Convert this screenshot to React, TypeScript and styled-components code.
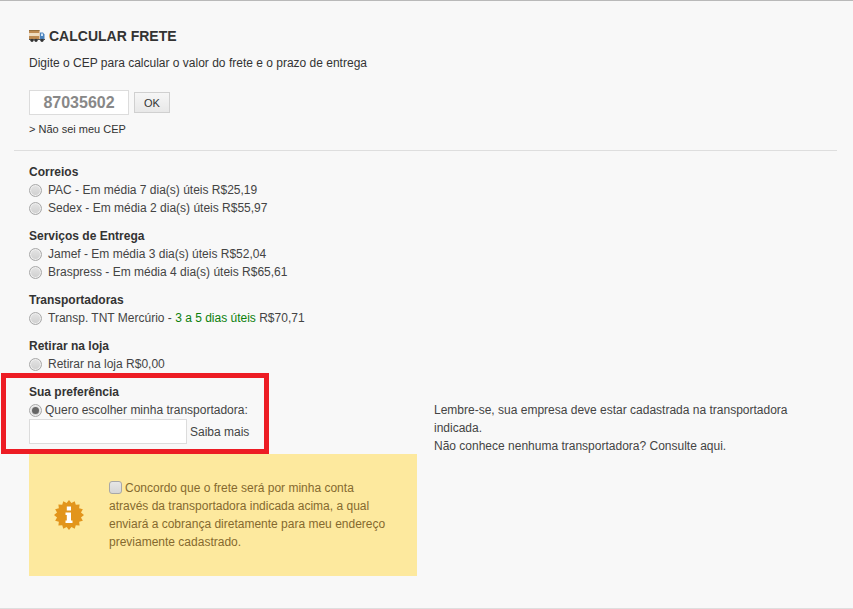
import styled, { createGlobalStyle } from 'styled-components'

const GlobalStyle = createGlobalStyle`
  html, body {
    margin: 0;
    padding: 0;
    background: #f8f8f8;
  }
  body {
    font-family: "Liberation Sans", Arial, sans-serif;
    font-size: 12px;
    color: #333;
  }
`

const Page = styled.div`
  width: 853px;
  height: 609px;
  box-sizing: border-box;
  border-top: 1px solid #b9b9b9;
  border-bottom: 1px solid #dedede;
  background: #f8f8f8;
  overflow: hidden;
`

const CepSection = styled.section`
  margin: 0 16px 0 14px;
  padding: 26px 0 13px 15px;
  border-bottom: 1px solid #dedede;
`

const Title = styled.h2`
  display: flex;
  align-items: center;
  gap: 4px;
  margin: 0;
  height: 18px;
  font-size: 14px;
  font-weight: 700;
  color: #333;
`

const Hint = styled.p`
  margin: 9px 0 0;
  line-height: 18px;
`

const CepRow = styled.div`
  display: flex;
  align-items: center;
  gap: 5px;
  margin-top: 18px;
`

const CepInput = styled.input`
  box-sizing: border-box;
  width: 100px;
  height: 25px;
  padding: 0;
  border: 1px solid #dcdcdc;
  background: #fff;
  color: #888;
  font: 700 16px "Liberation Sans", Arial, sans-serif;
  text-align: center;
`

const OkButton = styled.button`
  box-sizing: border-box;
  width: 36px;
  height: 21px;
  padding: 0;
  border: 1px solid #d0d0d0;
  background: linear-gradient(#f6f6f6, #e8e8e8);
  color: #333;
  font: 11px "Liberation Sans", Arial, sans-serif;
`

const CepLink = styled.a`
  display: block;
  margin-top: 6px;
  font-size: 11px;
  line-height: 16px;
  color: #333;
`

const Options = styled.div`
  padding: 12px 0 0 29px;
`

const Group = styled.div`
  margin-bottom: 10px;
`

const GroupName = styled.div`
  font-weight: 700;
  line-height: 18px;
`

const OptionRow = styled.label`
  display: flex;
  align-items: center;
  gap: 6px;
  height: 18px;
  color: #444;
`

const Radio = styled.span<{ $checked?: boolean }>`
  position: relative;
  flex: none;
  box-sizing: border-box;
  width: 13px;
  height: 13px;
  border: 1px solid #a8a8a8;
  border-radius: 50%;
  background: linear-gradient(#e4e4e4, #cfcfcf);
  box-shadow: inset 0 0 0 1px #efefef;

  ${props => props.$checked && `
    &::after {
      content: '';
      position: absolute;
      top: 2px;
      left: 2px;
      width: 7px;
      height: 7px;
      border-radius: 50%;
      background: #666;
    }
  `}
`

const Green = styled.span`
  color: #0b7f0b;
`

const PreferenceRow = styled.div`
  display: flex;
  align-items: flex-start;
`

const PreferenceBlock = styled.div`
  position: relative;
  flex: none;
  width: 405px;

  &::after {
    content: '';
    position: absolute;
    top: -10px;
    left: -28px;
    width: 258px;
    height: 71px;
    border: 5px solid #ed1c24;
  }
`

const ChoiceRow = styled(OptionRow)`
  gap: 3px;
`

const CarrierRow = styled.div`
  display: flex;
  align-items: center;
  gap: 3px;
  height: 25px;
  color: #444;
`

const CarrierInput = styled.input`
  box-sizing: border-box;
  width: 158px;
  height: 25px;
  padding: 0;
  border: 1px solid #dcdcdc;
  background: #fff;
`

const Notice = styled.div`
  display: flex;
  align-items: center;
  box-sizing: border-box;
  width: 388px;
  height: 122px;
  margin-top: 10px;
  padding-left: 25px;
  background: #fde99e;
  color: #85692e;
`

const NoticeText = styled.p`
  margin: 0 0 0 25px;
  width: 280px;
  line-height: 18px;
`

const Check = styled.span`
  display: inline-block;
  box-sizing: border-box;
  width: 13px;
  height: 13px;
  margin-right: 3px;
  vertical-align: -2px;
  border: 1px solid #a8a8a8;
  border-radius: 3px;
  background: linear-gradient(#e6e6e6, #d6d6d6);
`

const SideNote = styled.p`
  margin: 18px 0 0;
  width: 380px;
  line-height: 18px;
  color: #444;
`

function TruckIcon() {
  return (
    <svg width="16" height="12" viewBox="0 0 16 12" aria-hidden="true">
      <rect x="0" y="0" width="10.5" height="9" fill="#bd8a52" />
      <rect x="0" y="3" width="10.5" height="3" fill="#efdcc0" />
      <rect x="0" y="0" width="10.5" height="1" fill="#96703f" />
      <path d="M11 2.5h3l1.5 2v4.5H11z" fill="#4a82bd" />
      <rect x="12" y="3.5" width="2" height="2.5" fill="#cfe4f7" />
      <rect x="0" y="9" width="16" height="1" fill="#555" />
      <circle cx="3" cy="10.3" r="1.6" fill="#333" />
      <circle cx="7" cy="10.3" r="1.6" fill="#333" />
      <circle cx="13" cy="10.3" r="1.6" fill="#333" />
    </svg>
  )
}

function InfoBadge() {
  const points: string[] = []
  for (let i = 0; i < 32; i++) {
    const r = i % 2 === 0 ? 15 : 12.2
    const a = (Math.PI * 2 * i) / 32
    points.push(`${15 + r * Math.cos(a)},${15 + r * Math.sin(a)}`)
  }
  return (
    <svg width="30" height="30" viewBox="0 0 30 30" aria-hidden="true">
      <polygon points={points.join(' ')} fill="#e2951c" />
      <rect x="12.8" y="6.5" width="4.2" height="4" fill="#fff" />
      <path d="M11.5 12.5h5.5v8h1.5v2.5h-7v-2.5h1.3v-5.5h-1.3z" fill="#fff" />
    </svg>
  )
}

export default function App() {
  return (
    <Page>
      <GlobalStyle />
      <CepSection>
        <Title>
          <TruckIcon />
          CALCULAR FRETE
        </Title>
        <Hint>Digite o CEP para calcular o valor do frete e o prazo de entrega</Hint>
        <CepRow>
          <CepInput defaultValue="87035602" />
          <OkButton type="button">OK</OkButton>
        </CepRow>
        <CepLink>&gt; Não sei meu CEP</CepLink>
      </CepSection>

      <Options>
        <Group>
          <GroupName>Correios</GroupName>
          <OptionRow><Radio />PAC - Em média 7 dia(s) úteis R$25,19</OptionRow>
          <OptionRow><Radio />Sedex - Em média 2 dia(s) úteis R$55,97</OptionRow>
        </Group>
        <Group>
          <GroupName>Serviços de Entrega</GroupName>
          <OptionRow><Radio />Jamef - Em média 3 dia(s) úteis R$52,04</OptionRow>
          <OptionRow><Radio />Braspress - Em média 4 dia(s) úteis R$65,61</OptionRow>
        </Group>
        <Group>
          <GroupName>Transportadoras</GroupName>
          <OptionRow>
            <Radio />
            <span>Transp. TNT Mercúrio - <Green>3 a 5 dias úteis</Green> R$70,71</span>
          </OptionRow>
        </Group>
        <Group>
          <GroupName>Retirar na loja</GroupName>
          <OptionRow><Radio />Retirar na loja R$0,00</OptionRow>
        </Group>

        <PreferenceRow>
          <PreferenceBlock>
            <GroupName>Sua preferência</GroupName>
            <ChoiceRow><Radio $checked />Quero escolher minha transportadora:</ChoiceRow>
            <CarrierRow>
              <CarrierInput />
              Saiba mais
            </CarrierRow>
            <Notice>
              <InfoBadge />
              <NoticeText>
                <Check />
                Concordo que o frete será por minha conta através da transportadora indicada acima, a qual enviará a cobrança diretamente para meu endereço previamente cadastrado.
              </NoticeText>
            </Notice>
          </PreferenceBlock>
          <SideNote>
            Lembre-se, sua empresa deve estar cadastrada na transportadora indicada.
            <br />
            Não conhece nenhuma transportadora? Consulte aqui.
          </SideNote>
        </PreferenceRow>
      </Options>
    </Page>
  )
}
